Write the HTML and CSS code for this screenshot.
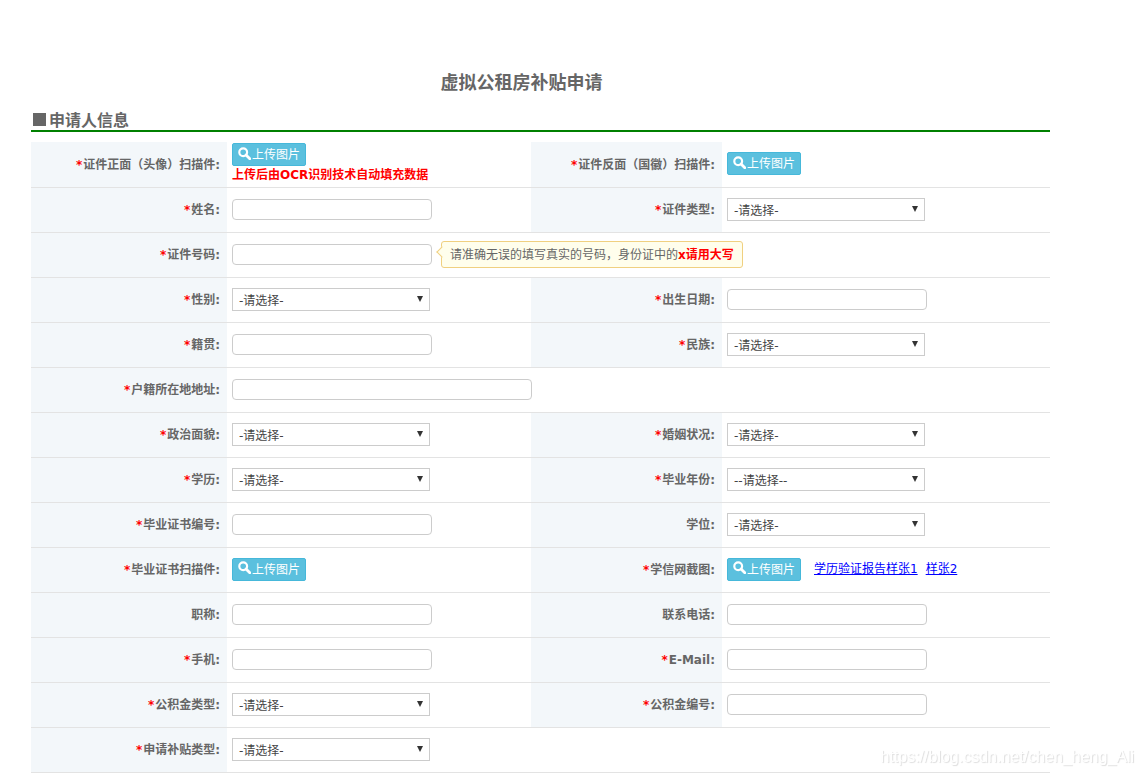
FILE: index.html
```html
<!DOCTYPE html>
<html lang="zh-CN">
<head>
<meta charset="utf-8">
<title>虚拟公租房补贴申请</title>
<link rel="stylesheet" href="styles.css">
</head>
<body>
<svg class="defs" aria-hidden="true"><symbol id="search" viewBox="0 0 12 12"><circle cx="4.8" cy="4.8" r="3.6" fill="none" stroke="currentColor" stroke-width="2"/><path d="M7.4 7.4 L10.9 10.9" stroke="currentColor" stroke-width="2.6" stroke-linecap="round"/></symbol></svg>
<main class="page">
<h1 class="title">虚拟公租房补贴申请</h1>
<h2 class="section"><span class="square"></span>申请人信息</h2>
<form class="form">
<div class="row">
<label class="name" for="front"><span class="req">*</span>证件正面（头像）扫描件:</label>
<div class="field stacked"><button type="button" class="upload" id="front"><svg class="icon"><use href="#search"/></svg>上传图片</button><strong class="note">上传后由OCR识别技术自动填充数据</strong></div>
<label class="name" for="back"><span class="req">*</span>证件反面（国徽）扫描件:</label>
<div class="field"><button type="button" class="upload" id="back"><svg class="icon"><use href="#search"/></svg>上传图片</button></div>
</div>
<div class="row">
<label class="name" for="fullname"><span class="req">*</span>姓名:</label>
<div class="field"><input class="text" type="text" id="fullname"></div>
<label class="name" for="idtype"><span class="req">*</span>证件类型:</label>
<div class="field"><select class="choice" id="idtype"><option>-请选择-</option></select></div>
</div>
<div class="row">
<label class="name" for="idno"><span class="req">*</span>证件号码:</label>
<div class="field wide"><input class="text" type="text" id="idno"><div class="tip">请准确无误的填写真实的号码，身份证中的<strong class="warn">x请用大写</strong></div></div>
</div>
<div class="row">
<label class="name" for="sex"><span class="req">*</span>性别:</label>
<div class="field"><select class="choice" id="sex"><option>-请选择-</option></select></div>
<label class="name" for="birth"><span class="req">*</span>出生日期:</label>
<div class="field"><input class="text" type="text" id="birth"></div>
</div>
<div class="row">
<label class="name" for="origin"><span class="req">*</span>籍贯:</label>
<div class="field"><input class="text" type="text" id="origin"></div>
<label class="name" for="nation"><span class="req">*</span>民族:</label>
<div class="field"><select class="choice" id="nation"><option>-请选择-</option></select></div>
</div>
<div class="row">
<label class="name" for="address"><span class="req">*</span>户籍所在地地址:</label>
<div class="field wide"><input class="text long" type="text" id="address"></div>
</div>
<div class="row">
<label class="name" for="politics"><span class="req">*</span>政治面貌:</label>
<div class="field"><select class="choice" id="politics"><option>-请选择-</option></select></div>
<label class="name" for="marriage"><span class="req">*</span>婚姻状况:</label>
<div class="field"><select class="choice" id="marriage"><option>-请选择-</option></select></div>
</div>
<div class="row">
<label class="name" for="education"><span class="req">*</span>学历:</label>
<div class="field"><select class="choice" id="education"><option>-请选择-</option></select></div>
<label class="name" for="gradyear"><span class="req">*</span>毕业年份:</label>
<div class="field"><select class="choice" id="gradyear"><option>--请选择--</option></select></div>
</div>
<div class="row">
<label class="name" for="certno"><span class="req">*</span>毕业证书编号:</label>
<div class="field"><input class="text" type="text" id="certno"></div>
<label class="name" for="degree">学位:</label>
<div class="field"><select class="choice" id="degree"><option>-请选择-</option></select></div>
</div>
<div class="row">
<label class="name" for="certscan"><span class="req">*</span>毕业证书扫描件:</label>
<div class="field"><button type="button" class="upload" id="certscan"><svg class="icon"><use href="#search"/></svg>上传图片</button></div>
<label class="name" for="chsi"><span class="req">*</span>学信网截图:</label>
<div class="field"><button type="button" class="upload" id="chsi"><svg class="icon"><use href="#search"/></svg>上传图片</button><div class="samples"><a href="#sample1">学历验证报告样张1</a><a href="#sample2">样张2</a></div></div>
</div>
<div class="row">
<label class="name" for="jobtitle">职称:</label>
<div class="field"><input class="text" type="text" id="jobtitle"></div>
<label class="name" for="phone">联系电话:</label>
<div class="field"><input class="text" type="text" id="phone"></div>
</div>
<div class="row">
<label class="name" for="mobile"><span class="req">*</span>手机:</label>
<div class="field"><input class="text" type="text" id="mobile"></div>
<label class="name" for="email"><span class="req">*</span>E-Mail:</label>
<div class="field"><input class="text" type="text" id="email"></div>
</div>
<div class="row">
<label class="name" for="fundtype"><span class="req">*</span>公积金类型:</label>
<div class="field"><select class="choice" id="fundtype"><option>-请选择-</option></select></div>
<label class="name" for="fundno"><span class="req">*</span>公积金编号:</label>
<div class="field"><input class="text" type="text" id="fundno"></div>
</div>
<div class="row">
<label class="name" for="subsidy"><span class="req">*</span>申请补贴类型:</label>
<div class="field wide"><select class="choice" id="subsidy"><option>-请选择-</option></select></div>
</div>
</form>
</main>
<div class="watermark">https://blog.csdn.net/chen_heng_Ali</div>
</body>
</html>
```
FILE: styles.css
```css
* { box-sizing: border-box; }

body {
  margin: 0;
  background: #fff;
  color: #666;
  font: 12px/18px "DejaVu Sans", "Noto Sans CJK SC", sans-serif;
}

.defs { display: none; }

.page { padding: 69px 92px 0 31px; }

.title {
  margin: 0;
  padding-right: 38px;
  font-size: 18px;
  line-height: 28px;
  text-align: center;
}

.section {
  display: flex;
  align-items: flex-end;
  gap: 3px;
  margin: 15px 0 10px;
  padding-left: 2px;
  border-bottom: 2px solid #008000;
  font-size: 16px;
  font-weight: bold;
  line-height: 18px;
}

.square {
  width: 13px;
  height: 13px;
  margin-bottom: 4px;
  background: #666;
}

.row {
  display: grid;
  grid-template-columns: 196px 304fr 191px 328fr;
  min-height: 45px;
  border-bottom: 1px solid #e3e3e3;
}

.row:first-child { min-height: 46px; }

.name {
  display: flex;
  align-items: center;
  justify-content: flex-end;
  padding-right: 7px;
  background: #f3f7fa;
  font-weight: bold;
}

.req {
  margin-right: 1px;
  color: #f00;
}

.field {
  display: flex;
  align-items: center;
  padding: 0 0 2px 5px;
}

.wide { grid-column: 2 / -1; }

.stacked {
  flex-direction: column;
  align-items: flex-start;
  justify-content: center;
}

.note {
  color: #f00;
  line-height: 18px;
}

.text {
  width: 200px;
  height: 21px;
  padding: 0 6px;
  border: 1px solid #ccc;
  border-radius: 4px;
  background: #fff;
  color: #444;
  font: inherit;
}

.long { width: 300px; }

.choice {
  width: 198px;
  height: 23px;
  padding: 3px 6px 0;
  border: 1px solid #ccc;
  border-radius: 0;
  appearance: none;
  background: #fff url("data:image/svg+xml,%3Csvg xmlns='http://www.w3.org/2000/svg' width='6' height='6'%3E%3Cpath d='M0 0H6L3 6Z' fill='%23333'/%3E%3C/svg%3E") no-repeat right 6px top 7px;
  color: #444;
  font: inherit;
}

.upload {
  display: flex;
  align-items: center;
  gap: 1px;
  height: 23px;
  padding: 1px 5px 0;
  border: 1px solid #46b8da;
  border-radius: 2px;
  background: #5bc0de;
  color: #fff;
  font: inherit;
  white-space: nowrap;
}

.icon {
  width: 13px;
  height: 13px;
  margin-bottom: 4px;
}

.tip {
  position: relative;
  margin-left: 9px;
  padding: 4px 8px 3px;
  border: 1px solid #f0d080;
  border-radius: 3px;
  background: #fffeec;
  white-space: nowrap;
}

.tip::before {
  content: "";
  position: absolute;
  top: 6px;
  left: -4px;
  width: 7px;
  height: 7px;
  border: 1px solid #f0d080;
  border-width: 0 0 1px 1px;
  background: #fffeec;
  transform: rotate(45deg);
}

.warn { color: #f00; }

.samples {
  display: flex;
  gap: 8px;
  margin-left: 13px;
}

.samples a { color: #00f; }

.watermark {
  position: fixed;
  right: 8px;
  bottom: 9px;
  color: #fff;
  font: 16px/20px "Liberation Sans", Arial, sans-serif;
  text-shadow: 1px 1px 1px #ddd;
}
```
